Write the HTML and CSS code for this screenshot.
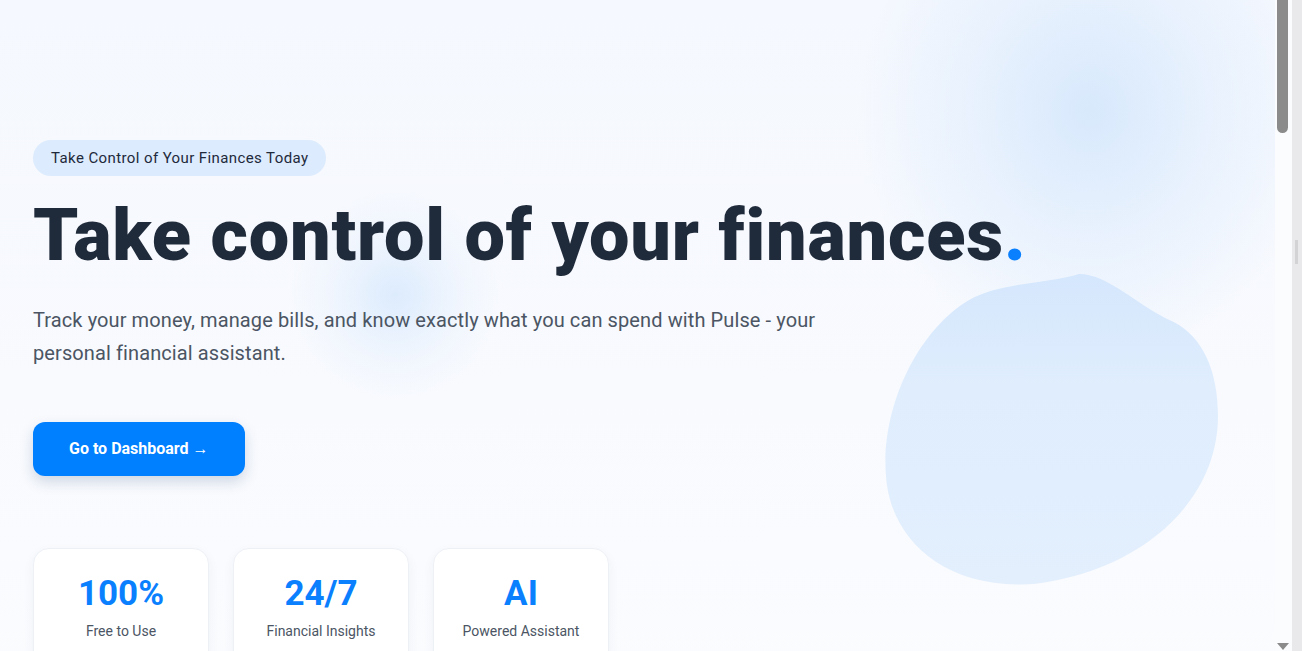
FILE: index.html
```html
<!DOCTYPE html>
<html lang="en">
<head>
<meta charset="utf-8">
<title>Pulse</title>
<link rel="stylesheet" href="styles.css">
</head>
<body>
<div class="page">
  <div class="glow glow-top"></div>
  <div class="glow glow-mid"></div>
  <svg class="blob" viewBox="0 0 340 320" aria-hidden="true">
    <defs>
      <linearGradient id="bg1" x1="0" y1="0" x2="0" y2="1">
        <stop offset="0" stop-color="#d5e7fd"/>
        <stop offset="0.35" stop-color="#dfedfd"/>
        <stop offset="1" stop-color="#e3effd"/>
      </linearGradient>
    </defs>
    <path fill="url(#bg1)" d="M195 2 C225 2 255 35 290 50 C320 65 335 100 335 145 C335 230 260 300 150 314 C60 320 10 270 2 215 C-8 145 30 60 85 28 C115 10 165 12 195 2 Z"/>
  </svg>
  <main class="hero">
    <span class="badge">Take Control of Your Finances Today</span>
    <h1 class="title">Take control of your finances<span class="dot">.</span></h1>
    <p class="lead">Track your money, manage bills, and know exactly what you can spend with Pulse - your personal financial assistant.</p>
    <div class="actions">
      <a class="btn" href="#">Go to Dashboard →</a>
    </div>
    <div class="stats">
      <div class="stat"><div class="num">100%</div><div class="label">Free to Use</div></div>
      <div class="stat"><div class="num">24/7</div><div class="label">Financial Insights</div></div>
      <div class="stat"><div class="num">AI</div><div class="label">Powered Assistant</div></div>
    </div>
  </main>
</div>
<div class="scrollbar" aria-hidden="true">
  <div class="sb-inner">
    <div class="sb-thumb"></div>
    <div class="sb-arrow"></div>
  </div>
  <div class="sb-outer">
    <div class="sb-mark"></div>
  </div>
</div>
</body>
</html>
```

FILE: styles.css
```css
html, body {
  margin: 0;
  padding: 0;
}
body {
  background: #fbfcfe;
  font-family: Roboto, "Noto Sans", sans-serif;
  color: #1f2937;
}
.page {
  position: relative;
  min-height: 3200px;
  overflow: hidden;
  background: linear-gradient(180deg, #f5f8fe 0px, #f8fafe 400px, #fbfcfe 700px, #fcfdfe 100%);
}
.glow {
  position: absolute;
  border-radius: 50%;
  pointer-events: none;
}
.glow-top {
  left: 860px;
  top: -140px;
  width: 460px;
  height: 500px;
  background: radial-gradient(closest-side, rgba(214,232,252,0.95), rgba(224,237,253,0.7) 45%, rgba(240,246,254,0) 100%);
}
.glow-mid {
  left: 290px;
  top: 190px;
  width: 210px;
  height: 210px;
  background: radial-gradient(closest-side, rgba(216,233,253,0.85), rgba(230,240,253,0.4) 60%, rgba(240,246,254,0) 100%);
}
.blob {
  position: absolute;
  left: 885px;
  top: 272px;
  width: 338px;
  height: 318px;
}
.hero {
  position: relative;
  padding: 140px 33px 0;
}
.badge {
  display: inline-block;
  background: #dcebfd;
  color: #1e293b;
  font-size: 15px;
  line-height: 36px;
  letter-spacing: 0.4px;
  padding: 0 18px;
  border-radius: 18px;
}
.title {
  margin: 18px 0 0;
  font-weight: 900;
  font-size: 72px;
  line-height: 84px;
  letter-spacing: 0.8px;
  color: #1f2a3a;
}
.dot {
  color: #0a80ff;
}
.lead {
  margin: 26px 0 0;
  max-width: 800px;
  font-size: 20px;
  line-height: 32.5px;
  letter-spacing: 0.1px;
  color: #4b5563;
}
.actions {
  margin-top: 53px;
}
.btn {
  display: inline-block;
  background: #0080ff;
  color: #fff;
  text-decoration: none;
  font-weight: 700;
  font-size: 16px;
  line-height: 54px;
  padding: 0 36px;
  border-radius: 12px;
  box-shadow: 0 6px 14px rgba(30, 60, 110, 0.18);
}
.stats {
  display: flex;
  gap: 24px;
  margin-top: 72px;
}
.stat {
  width: 176px;
  box-sizing: border-box;
  padding: 25px 0 30px;
  background: #fff;
  border: 1px solid #edf1f6;
  border-radius: 16px;
  box-shadow: 0 4px 12px rgba(30, 60, 110, 0.05);
  text-align: center;
}
.num {
  font-weight: 700;
  font-size: 35px;
  line-height: 40px;
  color: #0a80ff;
}
.label {
  margin-top: 7px;
  font-size: 14px;
  line-height: 20px;
  color: #4b5563;
}

/* window scrollbar chrome */
.scrollbar {
  position: fixed;
  top: 0;
  right: 0;
  bottom: 0;
  display: flex;
  pointer-events: none;
}
.sb-inner {
  position: relative;
  width: 17px;
  background: #fbfcfe;
}
.sb-thumb {
  position: absolute;
  left: 2px;
  top: 0;
  width: 11px;
  height: 133px;
  background: #8b8b8b;
  border-radius: 0 0 6px 6px;
}
.sb-arrow {
  position: absolute;
  left: 2px;
  bottom: 1px;
  width: 0;
  height: 0;
  border-left: 6px solid transparent;
  border-right: 6px solid transparent;
  border-top: 7px solid #8b8b8b;
}
.sb-outer {
  position: relative;
  width: 10px;
  background: #e9e9eb;
}
.sb-mark {
  position: absolute;
  left: 3px;
  top: 240px;
  width: 3px;
  height: 24px;
  background: #d3d3d5;
}
```
